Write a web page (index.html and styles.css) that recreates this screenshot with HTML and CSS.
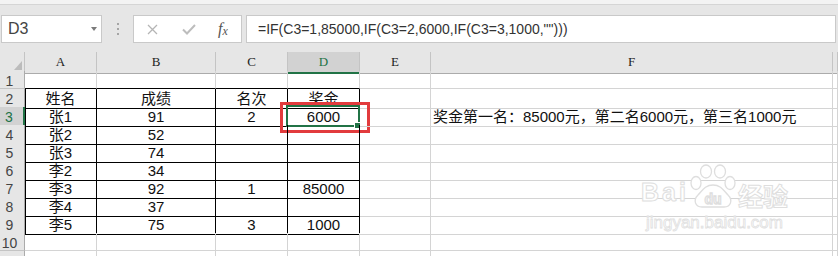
FILE: index.html
```html
<!DOCTYPE html>
<html lang="zh-CN">
<head>
    <meta charset="UTF-8">
    <meta name="viewport" content="width=device-width, initial-scale=1.0">
    <title>奖金公式</title>
    <link rel="stylesheet" href="styles.css">
</head>
<body>
    <div class="topstrip"></div>

    <!-- Formula bar -->
    <div class="formula-bar">
        <div class="namebox"><span>D3</span><span class="caret"></span></div>
        <div class="grip"><i></i><i></i><i></i></div>
        <div class="fbuttons">
            <svg class="icon-x" width="11" height="11" viewBox="0 0 11 11"><path d="M1 1 L10 10 M10 1 L1 10" /></svg>
            <svg class="icon-ok" width="14" height="11" viewBox="0 0 14 11"><path d="M1 5.5 L5 9.5 L13 1" /></svg>
            <span class="fx">f<i>x</i></span>
        </div>
        <div class="formula">=IF(C3=1,85000,IF(C3=2,6000,IF(C3=3,1000,"")))</div>
    </div>

    <!-- Sheet -->
    <div class="sheet">
        <div class="row head">
            <div class="corner"><span class="tri"></span></div>
            <div class="ch">A</div>
            <div class="ch">B</div>
            <div class="ch">C</div>
            <div class="ch on">D</div>
            <div class="ch">E</div>
            <div class="ch">F</div>
            <div class="ch"></div>
        </div>
        <div class="row">
            <div class="rh">1</div>
            <div class="c bb"></div><div class="c bb"></div><div class="c bb"></div><div class="c bb"></div>
            <div class="c"></div><div class="c"></div><div class="c"></div>
        </div>
        <div class="row">
            <div class="rh">2</div>
            <div class="c b bl">姓名</div><div class="c b">成绩</div><div class="c b">名次</div><div class="c b">奖金</div>
            <div class="c"></div><div class="c"></div><div class="c"></div>
        </div>
        <div class="row">
            <div class="rh on">3</div>
            <div class="c b bl">张1</div><div class="c b">91</div><div class="c b">2</div>
            <div class="c b">6000<span class="sel"><span class="handle"></span></span><span class="mark"></span></div>
            <div class="c"></div>
            <div class="c left">奖金第一名：85000元，第二名6000元，第三名1000元</div>
            <div class="c"></div>
        </div>
        <div class="row">
            <div class="rh">4</div>
            <div class="c b bl">张2</div><div class="c b">52</div><div class="c b"></div><div class="c b"></div>
            <div class="c"></div><div class="c"></div><div class="c"></div>
        </div>
        <div class="row">
            <div class="rh">5</div>
            <div class="c b bl">张3</div><div class="c b">74</div><div class="c b"></div><div class="c b"></div>
            <div class="c"></div><div class="c"></div><div class="c"></div>
        </div>
        <div class="row">
            <div class="rh">6</div>
            <div class="c b bl">李2</div><div class="c b">34</div><div class="c b"></div><div class="c b"></div>
            <div class="c"></div><div class="c"></div><div class="c"></div>
        </div>
        <div class="row">
            <div class="rh">7</div>
            <div class="c b bl">李3</div><div class="c b">92</div><div class="c b">1</div><div class="c b">85000</div>
            <div class="c"></div><div class="c"></div><div class="c"></div>
        </div>
        <div class="row">
            <div class="rh">8</div>
            <div class="c b bl">李4</div><div class="c b">37</div><div class="c b"></div><div class="c b"></div>
            <div class="c"></div><div class="c"></div><div class="c"></div>
        </div>
        <div class="row">
            <div class="rh">9</div>
            <div class="c b bl">李5</div><div class="c b">75</div><div class="c b">3</div><div class="c b">1000</div>
            <div class="c"></div><div class="c"></div><div class="c"></div>
        </div>
        <div class="row">
            <div class="rh">10</div>
            <div class="c"></div><div class="c"></div><div class="c"></div><div class="c"></div>
            <div class="c"></div><div class="c"></div><div class="c"></div>
        </div>
        <div class="row last">
            <div class="rh"></div>
            <div class="c"></div><div class="c"></div><div class="c"></div><div class="c"></div>
            <div class="c"></div><div class="c"></div><div class="c"></div>
        </div>

        <!-- Watermark -->
        <div class="wm">
            <div class="wm-top">
                <span class="wm-bai">Bai</span>
                <svg class="paw" width="48" height="44" viewBox="0 0 48 44">
                    <ellipse cx="7" cy="19" rx="5" ry="6.5" />
                    <ellipse cx="17" cy="7.5" rx="5.5" ry="6.5" />
                    <ellipse cx="31" cy="7.5" rx="5.5" ry="6.5" />
                    <ellipse cx="41" cy="19" rx="5" ry="6.5" />
                    <path d="M24 21 C16 21 13 27 9 31 C4 36 6 43 13 43 L35 43 C42 43 44 36 39 31 C35 27 32 21 24 21 Z" />
                    <text x="24" y="40" text-anchor="middle">du</text>
                </svg>
                <span class="wm-jy">经验</span>
            </div>
            <div class="wm-url">jingyan.baidu.com</div>
        </div>
    </div>
</body>
</html>
```

FILE: styles.css
```css
body {
    margin: 0;
    width: 838px;
    height: 256px;
    overflow: hidden;
    background: #fff;
    font-family: "Liberation Sans", "Noto Sans CJK SC", sans-serif;
}
.topstrip {
    height: 4px;
    background: #f3f3f3;
    border-bottom: 1px solid #d5d5d5;
}

/* formula bar */
.formula-bar {
    display: flex;
    align-items: center;
    height: 47px;
    box-sizing: border-box;
    padding: 10px 2px 9px 1px;
    background: #e6e6e6;
}
.namebox {
    width: 101px;
    height: 28px;
    box-sizing: border-box;
    display: flex;
    align-items: center;
    padding-left: 6px;
    border: 1px solid #c9c9c9;
    background: #fff;
    font-size: 16px;
    color: #444;
}
.caret {
    margin-left: auto;
    margin-right: 4px;
    border-left: 3px solid transparent;
    border-right: 3px solid transparent;
    border-top: 4px solid #7b7b7b;
}
.grip {
    width: 31px;
    display: flex;
    flex-direction: column;
    align-items: center;
    gap: 3px;
}
.grip i {
    width: 2px;
    height: 2px;
    background: #a5a5a5;
}
.fbuttons {
    width: 109px;
    height: 28px;
    box-sizing: border-box;
    display: flex;
    align-items: center;
    border: 1px solid #c9c9c9;
    background: #fff;
}
.icon-x {
    margin-left: 13px;
    fill: none;
    stroke: #b5b5b5;
    stroke-width: 1.3;
}
.icon-ok {
    margin-left: 24px;
    fill: none;
    stroke: #bdbdbd;
    stroke-width: 2;
}
.fx {
    margin-left: 22px;
    font-family: "Liberation Serif", serif;
    font-style: italic;
    font-size: 16px;
    color: #555;
}
.fx i {
    font-size: 12px;
    position: relative;
    top: 1px;
}
.formula {
    flex: 1;
    height: 28px;
    box-sizing: border-box;
    margin-left: 4px;
    padding-left: 11px;
    display: flex;
    align-items: center;
    border: 1px solid #c9c9c9;
    background: #fff;
    font-size: 14px;
    color: #333;
}

/* sheet grid */
.sheet {
    position: relative;
}
.row {
    display: grid;
    grid-template-columns: 25px 72px 119px 72px 72px 71px 402px 1fr;
    height: 18px;
}
.row.head {
    height: 19px;
}
.row.last {
    height: 5px;
}
.corner, .ch, .rh, .c {
    box-sizing: border-box;
    border-right: 1px solid #d4d4d4;
    border-bottom: 1px solid #d4d4d4;
}
.row.last .rh, .row.last .c {
    border-bottom: none;
}
.corner {
    display: flex;
    justify-content: flex-end;
    align-items: flex-end;
    padding: 0 2px 3px 0;
    background: #e6e6e6;
    border-right-color: #c4c4c4;
    border-bottom-color: #ababab;
}
.tri {
    border-left: 8px solid transparent;
    border-bottom: 9px solid #bcbcbc;
}
.ch {
    background: #e6e6e6;
    border-right-color: #c4c4c4;
    border-bottom-color: #ababab;
    font-family: "Liberation Serif", serif;
    font-size: 13px;
    line-height: 20px;
    text-align: center;
    color: #222;
}
.ch.on {
    background: #d2d2d2;
    border-bottom: 2px solid #217346;
    color: #217346;
}
.rh {
    background: #e6e6e6;
    border-right-color: #ababab;
    border-bottom-color: #c4c4c4;
    padding-right: 5px;
    font-size: 14px;
    line-height: 21px;
    text-align: center;
    color: #444;
    overflow: hidden;
}
.rh.on {
    background: #d2d2d2;
    border-right: 2px solid #217346;
    color: #217346;
}
.c {
    position: relative;
    font-size: 15px;
    line-height: 19px;
    text-align: center;
    color: #111;
    white-space: nowrap;
}
.c.b {
    border-right-color: #000;
    border-bottom-color: #000;
}
.c.bb {
    border-bottom-color: #000;
}
.c.bl {
    box-shadow: inset 1px 0 0 #000;
}
.c.left {
    text-align: left;
    padding-left: 2px;
}

/* selection and annotation */
.sel {
    position: absolute;
    left: -2px;
    top: -2px;
    right: -1px;
    bottom: -1px;
    border: 2px solid #217346;
}
.handle {
    position: absolute;
    right: -2px;
    bottom: -3px;
    width: 5px;
    height: 5px;
    background: #217346;
    box-shadow: 0 0 0 1px #fff;
}
.mark {
    position: absolute;
    left: -8px;
    top: -5px;
    width: 90px;
    height: 31px;
    box-sizing: border-box;
    border: 3px solid #e23b3d;
}

/* watermark */
.wm {
    position: absolute;
    left: 641px;
    top: 112px;
    display: flex;
    flex-direction: column;
    align-items: center;
    color: #fff;
    -webkit-text-stroke: 1px #dedede;
}
.wm-top {
    display: flex;
    align-items: flex-end;
}
.wm-bai {
    font-size: 25px;
    font-weight: bold;
    letter-spacing: 3px;
    line-height: 1;
    margin-bottom: 3px;
}
.paw {
    fill: #fff;
    stroke: #dedede;
    stroke-width: 1.3;
}
.paw text {
    font-family: "Liberation Sans", sans-serif;
    font-weight: bold;
    font-size: 14px;
}
.wm-jy {
    font-family: "Noto Sans CJK SC", sans-serif;
    font-size: 25px;
    font-weight: bold;
    line-height: 1;
    margin-left: 1px;
}
.wm-url {
    margin-top: 6px;
    font-size: 17px;
    line-height: 1;
    -webkit-text-stroke: 0.8px #e0e0e0;
}
```
